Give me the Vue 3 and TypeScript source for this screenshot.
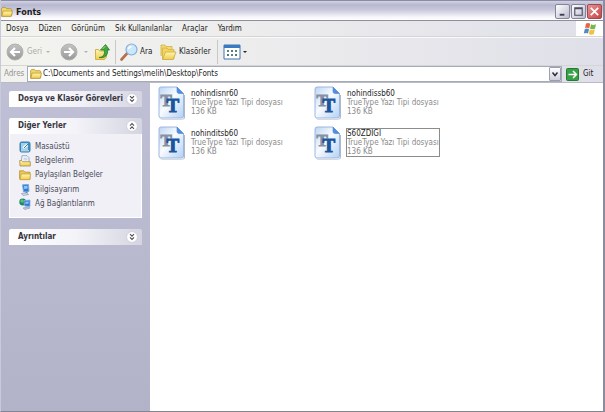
<script setup lang="ts">
import { ref } from 'vue'

interface FontFile { name: string; selected?: boolean }
interface Place { label: string; icon: string }

const menus: string[] = ['Dosya', 'Düzen', 'Görünüm', 'Sık Kullanılanlar', 'Araçlar', 'Yardım']
const places: Place[] = [
  { label: 'Masaüstü', icon: 'desktop' },
  { label: 'Belgelerim', icon: 'documents' },
  { label: 'Paylaşılan Belgeler', icon: 'shared' },
  { label: 'Bilgisayarım', icon: 'computer' },
  { label: 'Ağ Bağlantılarım', icon: 'network' },
]
const files: FontFile[] = [
  { name: 'nohindisnr60' },
  { name: 'nohindissb60' },
  { name: 'nohinditsb60' },
  { name: 'S60ZDIGI', selected: true },
]
const address = ref('C:\\Documents and Settings\\melih\\Desktop\\Fonts')
</script>

<template>
  <div class="window">
    <svg class="defs" width="0" height="0" aria-hidden="true">
      <defs>
        <linearGradient id="folderFill" x1="0" y1="0" x2="0" y2="1">
          <stop offset="0" stop-color="#fff6ac" /><stop offset="1" stop-color="#f0cc50" />
        </linearGradient>
        <linearGradient id="pageFill" x1="0" y1="0" x2="1" y2="1">
          <stop offset="0" stop-color="#bcd4f4" /><stop offset=".45" stop-color="#f8fbff" /><stop offset="1" stop-color="#b4d0f5" />
        </linearGradient>
        <linearGradient id="grayFill" x1="0" y1="0" x2="0" y2="1">
          <stop offset="0" stop-color="#c4c4c4" /><stop offset="1" stop-color="#989898" />
        </linearGradient>
        <symbol id="folder" viewBox="0 0 13 12">
          <path d="M.7 10.5V2.2L1.8 1h3l1.2 1.4h4.6q1 0 1 1v6q0 1-1 1z" fill="#f3d765" stroke="#ae8c2d" stroke-width=".8" />
          <path d="M.8 10.7 2.4 5h10l-1.300 5.700z" fill="url(#folderFill)" stroke="#b8932f" stroke-width=".8" />
        </symbol>
        <symbol id="desktop" viewBox="0 0 12 12">
          <rect x="1" y="1" width="10" height="10" rx="1.5" fill="#3f8fc4" stroke="#3b7eaa" />
          <path d="M2 2h7v7H2z" fill="#9fd0ec" /><path d="m3.5 6 4-3 1.5 2-4 3z" fill="#fff" />
          <path d="m5 7 4-4" stroke="#397ba4" /><path d="M2 9.8h8" stroke="#dceff8" />
        </symbol>
        <symbol id="documents" viewBox="0 0 12 12">
          <path d="M3 .7h5l2 2V9H2z" fill="#f4f8ff" stroke="#829bc2" stroke-width=".8" />
          <path d="M4.5 3.2h4M4.500 4.800h4" stroke="#a3b8d7" stroke-width=".7" />
          <path d="M.7 5.500h2l1 1.200h7.600V11H1z" fill="url(#folderFill)" stroke="#a78b4a" stroke-width=".8" />
        </symbol>
        <symbol id="shared" viewBox="0 0 12 12">
          <path d="M.6 10V1.800h4L6 3.200h5v7.300H1z" fill="#ebc750" stroke="#b89132" stroke-width=".8" />
          <path d="M1 10.700 2.300 5h9.200l-.8 5.700z" fill="url(#folderFill)" stroke="#c39e39" stroke-width=".7" />
        </symbol>
        <symbol id="computer" viewBox="0 0 12 12">
          <path d="m3.500 .8 6-.4.500 7-5.500.5z" fill="#2f7cd6" stroke="#7fa9d8" stroke-width=".9" />
          <path d="m5 2 3.500-.3.200 2.800L5.200 5z" fill="#8ec8fa" /><path d="M6.500 7.500h2v2h-2z" fill="#5e80ad" />
          <path d="m2.500 9.500 5-.5 2 1.500L4 11.500z" fill="#dce6f1" stroke="#8194ad" stroke-width=".7" />
        </symbol>
        <symbol id="network" viewBox="0 0 12 12">
          <circle cx="3.700" cy="4" r="3.400" fill="#1f8668" /><path d="m1 3 2-2 2 2-2 2z" fill="#5cc074" />
          <path d="m5 2.500 6-.5v6.500L5.500 8z" fill="#2f7bd2" stroke="#8db2de" stroke-width=".8" />
          <path d="m6.300 3.800 3.300-.2v2L6.500 6z" fill="#91c7f4" /><path d="m4 10 5-1 2 1-5 1.500z" fill="#bdcee3" stroke="#7d94b5" stroke-width=".6" />
        </symbol>
        <symbol id="fontfile" viewBox="0 0 28 34">
          <path d="M2 31q0 2 2 2h20q2 0 2-2V9h1v22q0 2.500-3 2.500H4q-2 0-2-2.500z" fill="#8c9ab2" opacity=".7" />
          <path d="M3 1h16l6.500 6.500V30q0 2-2 2H3q-2 0-2-2V3q0-2 2-2z" fill="url(#pageFill)" stroke="#94b1dc" stroke-width=".9" />
          <path d="M19 1v4.500q0 2 2 2h4.500z" fill="#4f8ee0" stroke="#5c8fd2" stroke-width=".7" />
          <text x="2.500" y="20" font-size="17" fill="#8592a6" stroke="#8592a6">T</text>
          <text x="8.500" y="26" font-size="19" fill="#1c559c" stroke="#1c559c">T</text>
        </symbol>
        <symbol id="chevrons" viewBox="0 0 12 12">
          <circle cx="6" cy="6" r="5.400" fill="#fff" stroke="#c8c8d4" stroke-width=".7" />
          <path d="m4 3.200 2 2 2-2M4 6.400l2 2 2-2" fill="none" stroke="#50505c" stroke-width="1.100" />
        </symbol>
      </defs>
    </svg>

    <header class="titlebar">
      <svg class="small-icon"><use href="#folder" /></svg>
      <h1>Fonts</h1>
      <div class="controls">
        <button type="button" aria-label="Simge durumuna küçült"><svg viewBox="0 0 14 14"><path d="M4 10.500h5" stroke="#3b3b52" stroke-width="2" /></svg></button>
        <button type="button" aria-label="Ekranı kapla"><svg viewBox="0 0 14 14"><path d="M3 3h8v8H3zM3 4h8" fill="none" stroke="#4b4b60" stroke-width="1.200" /></svg></button>
        <button type="button" class="close" aria-label="Kapat"><svg viewBox="0 0 14 14"><path d="m3 3 8 8m0-8-8 8" stroke="#fff" stroke-width="1.800" /></svg></button>
      </div>
    </header>

    <div class="menubar">
      <nav><button v-for="menu in menus" :key="menu" type="button">{{ menu }}</button></nav>
      <div class="flag">
        <svg viewBox="0 0 14 14">
          <path d="M3 1.500c2-.9 3-.6 4.200.3L6.200 6.400C4.800 5.500 3.600 5.600 2 6.200z" fill="#e2683c" />
          <path d="M8 2.300c1.600.8 3 .8 5-.1L12 6.700c-1.700.8-3.300.7-5 0z" fill="#78b74d" />
          <path d="M1.800 7c1.600-.7 2.800-.7 4.200.2L5 11.600c-1.200-.8-2.600-.8-4.200-.1z" fill="#5386cd" />
          <path d="M6.800 7.600c1.600.8 3.200.8 5 0l-1 4.500c-1.700.8-3.300.7-5-.1z" fill="#f0c23e" />
        </svg>
      </div>
    </div>

    <div class="toolbar">
      <button type="button" class="back" disabled>
        <svg viewBox="0 0 18 18"><circle cx="9" cy="9" r="8" fill="url(#grayFill)" stroke="#b0b0b0" /><path d="M14 9H5m4-4L5 9l4 4" fill="none" stroke="#fff" stroke-width="2.200" /></svg>
        <span>Geri</span><i class="caret"></i>
      </button>
      <button type="button" class="forward" disabled aria-label="İleri">
        <svg viewBox="0 0 18 18"><circle cx="9" cy="9" r="8" fill="url(#grayFill)" stroke="#b0b0b0" /><path d="M4 9h9M9 5l4 4-4 4" fill="none" stroke="#fff" stroke-width="2.200" /></svg>
        <i class="caret"></i>
      </button>
      <button type="button" class="up" aria-label="Yukarı">
        <svg viewBox="0 0 16 18"><path d="M1.500 16.500V6.500h3l1 1.500h7v6l-2 2.500z" fill="url(#folderFill)" stroke="#d0b24a" /><path d="M5 14.500c5-.5 6-3.500 5.200-7.500H6.500l5-5.500L15.500 7h-2c.8 5-2.500 8.500-8.500 7.500z" fill="#3fa836" stroke="#2a7a2c" stroke-width=".8" /><path d="M8.500 6 11.500 3" stroke="#a4dc7c" /></svg>
      </button>
      <button type="button" class="search">
        <svg viewBox="0 0 18 18"><path d="m7 10.500-5.500 6" stroke="#b66f4c" stroke-width="2.600" stroke-linecap="round" /><circle cx="11.500" cy="6.500" r="5.500" fill="#cbe8fb" stroke="#86addb" stroke-width="1.200" /><path d="M8.500 6c.3-1.400 1.400-2.200 3-2.200" fill="none" stroke="#fff" stroke-width="1.400" /></svg>
        <span>Ara</span>
      </button>
      <button type="button" class="folders">
        <svg viewBox="0 0 18 18"><path d="M2 13V2h4l1 1.500h6V6" fill="#f4db68" stroke="#d0b04a" stroke-width=".8" /><path d="M3.500 16V5H8l1 1.500h6V16z" fill="#f3d661" stroke="#d0b04a" stroke-width=".8" /><path d="m3.500 16.500 3-7.500H17l-3 7.500z" fill="url(#folderFill)" stroke="#cda83e" stroke-width=".8" /></svg>
        <span>Klasörler</span>
      </button>
      <button type="button" class="views" aria-label="Görünümler">
        <svg viewBox="0 0 18 16"><path d="M1 1h16v14H1z" fill="#fff" stroke="#3f74b0" /><path d="M1 1h16v3H1z" fill="#3b79c3" /><path d="M4 6h2v2H4zM8 6h2v2H8zM12 6h2v2h-2zM4 10h2v2H4zM8 10h2v2H8zM12 10h2v2h-2z" fill="#5c7387" /><path d="M4 7h2M8 11h2M12 7h2" stroke="#4fa56b" /></svg>
        <i class="caret dark"></i>
      </button>
    </div>

    <form class="addressbar" @submit.prevent>
      <label for="address">Adres</label>
      <div class="combo">
        <svg class="small-icon"><use href="#folder" /></svg>
        <input id="address" v-model="address" type="text" spellcheck="false">
        <button type="button" aria-label="Adres listesi"><svg viewBox="0 0 10 12"><path d="m2.500 4.500 2.500 3 2.500-3" fill="none" stroke="#30303c" stroke-width="1.500" /></svg></button>
      </div>
      <button type="submit" class="go">
        <svg viewBox="0 0 13 13"><rect x=".5" y=".5" width="12" height="12" rx="1" fill="#36a044" stroke="#257b36" /><path d="M2.500 6.500H10M7 3l3.500 3.500L7 10" fill="none" stroke="#fff" stroke-width="1.500" /></svg>
        <span>Git</span>
      </button>
    </form>

    <div class="body">
      <aside>
        <section>
          <h2>Dosya ve Klasör Görevleri<button type="button" aria-label="Genişlet"><svg><use href="#chevrons" /></svg></button></h2>
        </section>
        <section>
          <h2>Diğer Yerler<button type="button" class="open" aria-label="Daralt"><svg><use href="#chevrons" /></svg></button></h2>
          <ul>
            <li v-for="place in places" :key="place.label">
              <a href="#"><svg><use :href="`#${place.icon}`" /></svg>{{ place.label }}</a>
            </li>
          </ul>
        </section>
        <section>
          <h2>Ayrıntılar<button type="button" aria-label="Genişlet"><svg><use href="#chevrons" /></svg></button></h2>
        </section>
      </aside>
      <main>
        <article v-for="file in files" :key="file.name" class="file">
          <svg><use href="#fontfile" /></svg>
          <div class="caption" :class="{ selected: file.selected }">
            <strong>{{ file.name }}</strong>
            <span>TrueType Yazı Tipi dosyası</span>
            <span>136 KB</span>
          </div>
        </article>
      </main>
    </div>
  </div>
</template>

<style>
body { margin: 0; }
</style>

<style scoped>
* { box-sizing: border-box; }
.window {
  min-height: 100vh;
  display: flex;
  flex-direction: column;
  overflow: hidden;
  border-right: 2px solid #8c8c9e;
  border-bottom: 1px solid #85858f;
  border-left: 1px solid #c9c9dc;
  background: #fff;
  color: #1c1c1c;
  font: 8px/10px "DejaVu Sans Condensed", "DejaVu Sans", sans-serif;
}
.defs { position: absolute; }
button {
  display: flex;
  align-items: center;
  padding: 0;
  border: 0;
  background: none;
  color: inherit;
  font: inherit;
  white-space: nowrap;
}
svg { display: block; flex: none; }
.small-icon { width: 12px; height: 12px; }

.titlebar {
  height: 21px;
  display: flex;
  align-items: center;
  gap: 3px;
  padding-top: 2px;
  border-top: 1px solid #8b8ba8;
  border-bottom: 1px solid #8e8e9c;
  background: linear-gradient(#d4d4e4 0, #b7b7d0 4px, #c9c9dc 9px, #f6f6fa 16px, #fff 100%);
}
h1 { flex: 1; margin: 0; font: bold 9px/12px "DejaVu Sans Condensed", sans-serif; }
.controls { display: flex; gap: 1px; padding-right: 1px; }
.controls button {
  width: 15px;
  height: 15px;
  border: 1px solid #858599;
  border-radius: 2px;
  background: linear-gradient(135deg, #fff, #babacf);
}
.controls svg { width: 13px; height: 13px; }
.controls .close { border-color: #9d4b50; background: linear-gradient(135deg, #e69694, #c94347); }

.menubar, .toolbar, .addressbar { background: linear-gradient(90deg, #f3f3ee, #ebebed 50%, #dfdfe9); }
.menubar {
  height: 16px;
  display: flex;
  justify-content: space-between;
  border-bottom: 1px solid #d5d5d5;
}
nav { display: flex; align-items: center; gap: 10px; padding-left: 5px; }
.flag { width: 27px; display: grid; place-items: center; background: #fff; }
.flag svg { width: 14px; height: 14px; }

.toolbar {
  height: 29px;
  display: flex;
  align-items: center;
  padding-left: 5px;
  border-top: 1px solid #fafafa;
  border-bottom: 1px solid #d5d5d8;
}
.toolbar svg { width: 18px; height: 18px; }
.back { width: 54px; gap: 3px; color: #ababab; }
.forward { width: 34px; gap: 6px; }
.caret { border: 2px solid transparent; border-top-color: #b2b2b2; border-bottom: 0; }
.back .caret { margin-left: auto; margin-right: 10px; }
.caret.dark { border-top-color: #222; }
.toolbar .up { width: 22px; height: 24px; border-right: 1px solid #c8c8c8; }
.toolbar .up svg { width: 16px; }
.search { width: 43px; gap: 2px; padding-left: 4px; }
.folders { width: 58px; gap: 2px; }
.toolbar .views { height: 24px; gap: 2px; padding-left: 5px; border-left: 1px solid #c8c8c8; }
.toolbar .views svg { height: 16px; }

.addressbar { height: 16px; display: flex; align-items: center; }
.addressbar label { width: 26px; padding-left: 3px; color: #939393; }
.combo {
  flex: 1;
  height: 16px;
  display: flex;
  align-items: center;
  gap: 1px;
  padding-left: 2px;
  border: 1px solid #a5acb8;
  background: #fff;
}
.combo input {
  flex: 1;
  min-width: 0;
  padding: 0;
  border: 0;
  outline: 0;
  background: none;
  color: inherit;
  font: inherit;
}
.combo button { width: 12px; height: 14px; border: 1px solid #9c9cb2; border-radius: 1px; background: linear-gradient(#fff, #cfcfdd); }
.combo button svg { width: 10px; height: 12px; }
.go { width: 41px; gap: 4px; padding-left: 4px; }
.go svg { width: 13px; height: 13px; }

.body { flex: 1; display: flex; border-top: 1px solid #b9bac4; }
aside {
  width: 149px;
  flex: none;
  display: flex;
  flex-direction: column;
  gap: 11px;
  padding: 8px;
  background: linear-gradient(#bfbfd6, #b2b2c8);
}
h2 {
  height: 16px;
  display: flex;
  align-items: center;
  justify-content: space-between;
  margin: 0;
  padding: 0 4px 0 9px;
  border-radius: 2px 2px 0 0;
  background: linear-gradient(90deg, #fff, #f3f3f8 50%, #d5d5e2);
  color: #35353f;
  font: bold 8px/10px "DejaVu Sans Condensed", sans-serif;
  white-space: nowrap;
}
h2 svg { width: 12px; height: 12px; }
h2 .open { transform: rotate(180deg); }
ul {
  display: grid;
  grid-auto-rows: 1fr;
  height: 84px;
  margin: 0;
  padding: 6px 9px;
  border: 1px solid #fff;
  border-top: 0;
  background: #f0f0f6;
  list-style: none;
}
li { display: flex; align-items: center; }
a { display: flex; align-items: center; gap: 4px; color: #4b4b58; text-decoration: none; white-space: nowrap; }
a svg { width: 12px; height: 12px; }

main {
  flex: 1;
  display: grid;
  grid-template-columns: repeat(auto-fill, 156px);
  grid-auto-rows: 40px;
  align-content: start;
  padding: 3px 126px 0 8px;
}
.file { display: flex; align-items: flex-start; gap: 4px; }
.file > svg { width: 28px; height: 34px; font-family: "Liberation Serif", serif; font-weight: bold; }
.caption { display: flex; flex-direction: column; margin-top: 2px; border: 1px solid transparent; color: #8a8a8a; line-height: 9px; white-space: nowrap; }
.caption strong { color: #1c1c1c; font-weight: normal; }
.caption.selected { border-color: #8c8c8c; }
</style>
